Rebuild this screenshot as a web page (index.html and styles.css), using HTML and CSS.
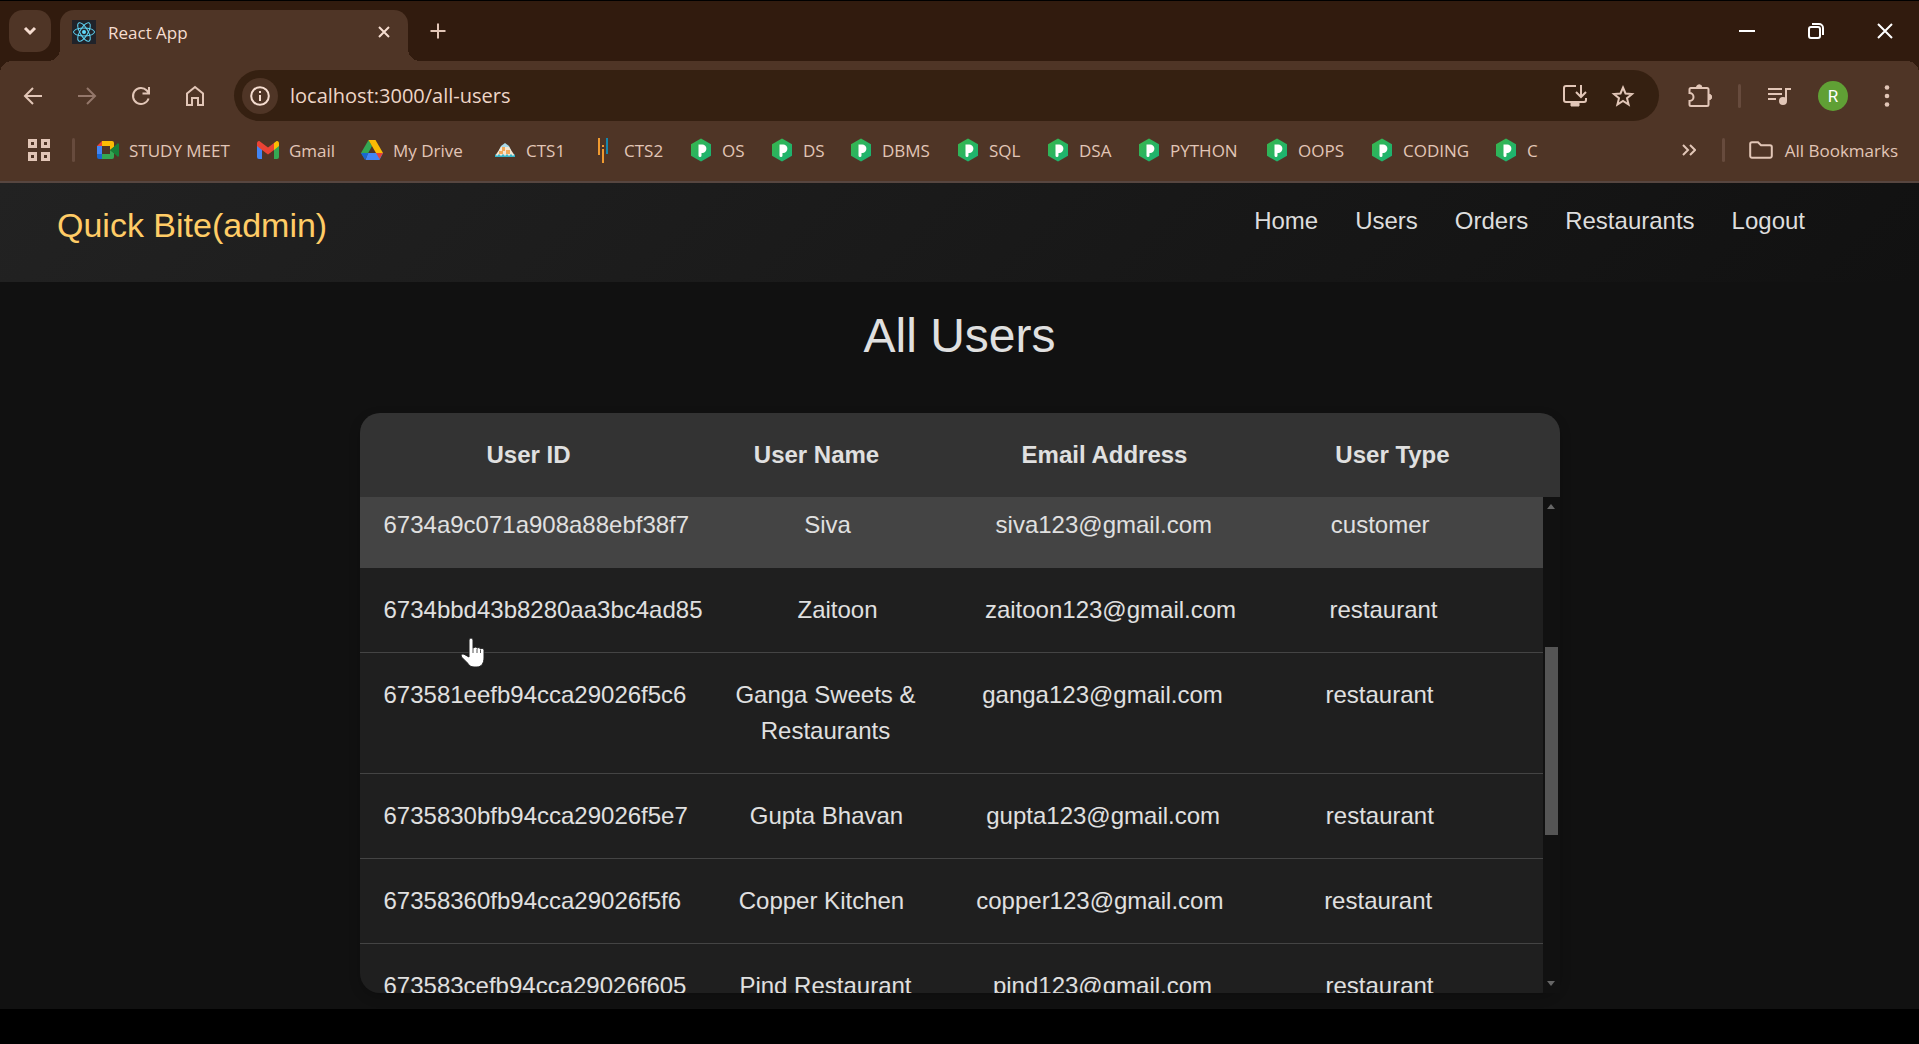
FILE: index.html
```html
<!DOCTYPE html>
<html lang="en">
<head>
<meta charset="utf-8">
<title>React App</title>
<link rel="stylesheet" href="styles.css">
</head>
<body>
<svg class="defs" aria-hidden="true">
  <defs>
    <linearGradient id="hexfill" x1="0" y1="0" x2="1" y2="1"><stop offset="0" stop-color="#3bb54a"/><stop offset="1" stop-color="#16b378"/></linearGradient>
    <symbol id="prep" viewBox="0 0 22 24"><path d="M11 .5 21 6.200v11.600L11 23.500 1 17.800V6.200z" fill="url(#hexfill)"/><path d="M8.500 6.500h3.700a4.200 4.200 0 0 1 0 8.400h-.7v2.600a1.500 1.500 0 0 1-3 0z" fill="#fff"/></symbol>
  </defs>
</svg>
<div class="browser">
  <div class="tabstrip">
    <button class="tab-search" aria-label="Search tabs"><svg width="14" height="10" viewBox="0 0 14 10"><path d="M2 2l5 5 5-5"/></svg></button>
    <div class="tab">
      <svg class="favicon" width="24" height="24" viewBox="0 0 24 24"><rect width="24" height="24" fill="#20232a"/><g fill="none" stroke="#61dafb" stroke-width="1"><ellipse cx="12" cy="12" rx="10.500" ry="4"/><ellipse cx="12" cy="12" rx="10.500" ry="4" transform="rotate(60 12 12)"/><ellipse cx="12" cy="12" rx="10.500" ry="4" transform="rotate(120 12 12)"/></g><circle cx="12" cy="12" r="2" fill="#61dafb"/></svg>
      <span class="tab-title">React App</span>
      <button class="icon-btn small" aria-label="Close tab"><svg width="14" height="14" viewBox="0 0 14 14"><path d="M2 2l10 10M12 2L2 12"/></svg></button>
    </div>
    <button class="icon-btn new-tab" aria-label="New tab"><svg width="18" height="18" viewBox="0 0 18 18"><path d="M9 1.500v15M1.500 9h15"/></svg></button>
    <div class="window-controls">
      <button aria-label="Minimize"><svg width="16" height="16" viewBox="0 0 16 16"><path d="M0 8h16"/></svg></button>
      <button aria-label="Restore"><svg width="16" height="16" viewBox="0 0 16 16"><rect x="1" y="4" width="11" height="11" rx="2"/><path d="M4 1h7a4 4 0 0 1 4 4v7"/></svg></button>
      <button aria-label="Close"><svg width="16" height="16" viewBox="0 0 16 16"><path d="M1 1l14 14M15 1L1 15"/></svg></button>
    </div>
  </div>
  <div class="chrome">
    <div class="toolbar">
      <button class="icon-btn" aria-label="Back"><svg width="20" height="20" viewBox="0 0 20 20"><path d="M19 10H2M10 2l-8 8 8 8"/></svg></button>
      <button class="icon-btn dim" aria-label="Forward"><svg width="20" height="20" viewBox="0 0 20 20"><path d="M1 10h17M10 2l8 8-8 8"/></svg></button>
      <button class="icon-btn" aria-label="Reload"><svg width="20" height="20" viewBox="0 0 20 20"><path d="M17.600 12.500A8 8 0 1 1 15.800 4.500L18 7M18 1v6.500h-6.500"/></svg></button>
      <button class="icon-btn" aria-label="Home"><svg width="20" height="22" viewBox="0 0 20 22"><path d="M2 8.500 10 2l8 6.500V20h-5v-7H7v7H2z"/></svg></button>
      <div class="omnibox">
        <button class="site-info" aria-label="Site information"><svg width="20" height="20" viewBox="0 0 20 20"><circle cx="10" cy="10" r="8.800"/><path d="M10 9v6M10 5v2"/></svg></button>
        <input class="url" type="text" aria-label="Address" value="localhost:3000/all-users">
        <button class="icon-btn inner" aria-label="Install app"><svg width="24" height="24" viewBox="0 0 24 24"><path d="M13 2H3a2 2 0 0 0-2 2v12a2 2 0 0 0 2 2h18a2 2 0 0 0 2-2v-2M18 1v11M13 8l5 5 5-5"/><path d="M8 19h8v3H8z" fill="currentColor" stroke-width="1"/></svg></button>
        <button class="icon-btn inner" aria-label="Bookmark"><svg width="24" height="24" viewBox="0 0 24 24"><path d="M12 3.500l2.500 6 6.500.500-5 4.200 1.600 6.300L12 17l-5.600 3.500L8 14.200 3 10l6.500-.500z"/></svg></button>
      </div>
      <button class="icon-btn" aria-label="Extensions"><svg width="26" height="26" viewBox="0 0 26 26"><path d="M4 5h16a1.500 1.500 0 0 1 1.500 1.500v15A1.500 1.500 0 0 1 20 23H4a1.500 1.500 0 0 1-1.500-1.500V18a4 4 0 0 0 0-8V6.500A1.500 1.500 0 0 1 4 5z"/><path d="M9.500 4.500a2.700 2.700 0 0 1 5.400 0zM22 11.300a2.700 2.700 0 0 1 0 5.400z" fill="currentColor" stroke-width="1"/></svg></button>
      <span class="divider"></span>
      <button class="icon-btn" aria-label="Media controls"><svg width="24" height="20" viewBox="0 0 24 20"><path d="M1 3h14M1 8h14M1 13h8M19 15V3h5"/><circle cx="16" cy="15" r="3" fill="currentColor"/></svg></button>
      <button class="icon-btn" aria-label="Profile"><span class="avatar">R</span></button>
      <button class="icon-btn" aria-label="Menu"><svg width="6" height="22" viewBox="0 0 6 22"><g fill="currentColor" stroke="none"><circle cx="3" cy="2.500" r="2.300"/><circle cx="3" cy="11" r="2.300"/><circle cx="3" cy="19.500" r="2.300"/></g></svg></button>
    </div>
    <div class="bookmarks">
      <button class="icon-btn apps" aria-label="Apps"><svg width="22" height="22" viewBox="0 0 22 22"><path d="M1.500 1.500h6v6h-6zM14.500 1.500h6v6h-6zM1.500 14.500h6v6h-6zM14.500 14.500h6v6h-6z"/></svg></button>
      <span class="divider"></span>
      <nav class="bookmark-list" aria-label="Bookmarks">
        <a href="#"><svg width="22" height="24" viewBox="0 0 22 24"><path d="M5 3v5H0z" fill="#ea4335"/><path d="M5 3h10a2 2 0 0 1 2 2v4l-4 3V8H5z" fill="#fbbc04"/><path d="M0 8h5v8H0z" fill="#4285f4"/><path d="M0 16h5v5H2a2 2 0 0 1-2-2z" fill="#1967d2"/><path d="M5 16h8v-4l4 3v4a2 2 0 0 1-2 2H5z" fill="#34a853"/><path d="M13 12l7-6a1 1 0 0 1 2 1v10a1 1 0 0 1-2 1z" fill="#188038"/></svg>STUDY MEET</a>
        <a href="#"><svg width="22" height="24" viewBox="0 0 22 24"><path d="M0 6l5 4v11H2a2 2 0 0 1-2-2z" fill="#4285f4"/><path d="M22 6l-5 4v11h3a2 2 0 0 0 2-2z" fill="#34a853"/><path d="M17 5l2-1.500c1.500-1 3 0 3 2V8l-5 4z" fill="#fbbc04"/><path d="M0 8V5.500c0-2 1.500-3 3-2L11 9.500 17 5v7l-6 4.500L5 12z" fill="#ea4335"/></svg>Gmail</a>
        <a href="#"><svg width="22" height="24" viewBox="0 0 22 24"><path d="M7.500 2 11 8 4 21 0 15z" fill="#34a853"/><path d="M7.500 2h7l7.500 13h-7z" fill="#fbbc04"/><path d="M7 15h15l-3.500 7h-14z" fill="#4285f4"/><path d="M0 15h7.500L4 22z" fill="#1967d2"/><path d="M15 15h7l-3.500 6z" fill="#ea4335"/></svg>My Drive</a>
        <a href="#"><svg width="22" height="24" viewBox="0 0 22 24"><path d="M11 5l4 3 2 4H5l2-4z" fill="#a9d9ea"/><path d="M7 9h8l6 9H1z" fill="#f4e6d2"/><path d="M8 9h3v4H8zM12 12h4v4h-4zM5 13h4v3H5z" fill="#f0a95a"/><path d="M1 16l2 2 2-2 2 2 2-2 2 2 2-2 2 2 2-2 2 2 2-2v3H1z" fill="#35b4c9"/></svg>CTS1</a>
        <a href="#"><svg width="22" height="26" viewBox="0 0 22 26"><path d="M7 1v17M11 12v14M11 8v2" stroke="#f09a30" stroke-width="2"/><path d="M15 1v16" stroke="#1686ad" stroke-width="2"/></svg>CTS2</a>
        <a href="#"><svg width="22" height="24"><use href="#prep"/></svg>OS</a>
        <a href="#"><svg width="22" height="24"><use href="#prep"/></svg>DS</a>
        <a href="#"><svg width="22" height="24"><use href="#prep"/></svg>DBMS</a>
        <a href="#"><svg width="22" height="24"><use href="#prep"/></svg>SQL</a>
        <a href="#"><svg width="22" height="24"><use href="#prep"/></svg>DSA</a>
        <a href="#"><svg width="22" height="24"><use href="#prep"/></svg>PYTHON</a>
        <a href="#"><svg width="22" height="24"><use href="#prep"/></svg>OOPS</a>
        <a href="#"><svg width="22" height="24"><use href="#prep"/></svg>CODING</a>
        <a href="#"><svg width="22" height="24"><use href="#prep"/></svg>C</a>
      </nav>
      <button class="icon-btn more" aria-label="More bookmarks"><svg width="14" height="12" viewBox="0 0 14 12"><path d="M1 1l5 5-5 5M8 1l5 5-5 5"/></svg></button>
      <span class="divider"></span>
      <button class="all-bookmarks"><svg width="24" height="18" viewBox="0 0 24 18"><path d="M3 1.200h6l3 3h9a1.800 1.800 0 0 1 1.800 1.800v9a1.800 1.800 0 0 1-1.800 1.800H3A1.800 1.800 0 0 1 1.200 15V3A1.800 1.800 0 0 1 3 1.200z"/></svg>All Bookmarks</button>
    </div>
  </div>
</div>
<div class="page">
  <header class="site-header">
    <a class="brand" href="#">Quick Bite(admin)</a>
    <nav class="site-nav" aria-label="Main">
      <a href="#">Home</a><a href="#">Users</a><a href="#">Orders</a><a href="#">Restaurants</a><a href="#">Logout</a>
    </nav>
  </header>
  <main>
    <h1>All Users</h1>
    <div class="table-box">
      <table class="users">
        <thead>
          <tr><th>User ID</th><th>User Name</th><th>Email Address</th><th>User Type</th></tr>
        </thead>
        <tbody>
          <tr class="active"><td>6734a9c071a908a88ebf38f7</td><td>Siva</td><td>siva123@gmail.com</td><td>customer</td></tr>
          <tr><td>6734bbd43b8280aa3bc4ad85</td><td>Zaitoon</td><td>zaitoon123@gmail.com</td><td>restaurant</td></tr>
          <tr><td>673581eefb94cca29026f5c6</td><td>Ganga Sweets &amp; Restaurants</td><td>ganga123@gmail.com</td><td>restaurant</td></tr>
          <tr><td>6735830bfb94cca29026f5e7</td><td>Gupta Bhavan</td><td>gupta123@gmail.com</td><td>restaurant</td></tr>
          <tr><td>67358360fb94cca29026f5f6</td><td>Copper Kitchen</td><td>copper123@gmail.com</td><td>restaurant</td></tr>
          <tr><td>673583cefb94cca29026f605</td><td>Pind Restaurant</td><td>pind123@gmail.com</td><td>restaurant</td></tr>
        </tbody>
      </table>
      <div class="scrollbar" aria-hidden="true">
        <span class="arrow up"></span><span class="thumb"></span><span class="arrow down"></span>
      </div>
      <svg class="pointer" width="26" height="32" viewBox="0 0 26 32" aria-hidden="true"><path d="M9 3a2 2 0 0 1 4 0v8l1-.500a2 2 0 0 1 3 .800 2 2 0 0 1 3.500.800 2 2 0 0 1 3.500 1.500V21c0 5-2.500 9-7 9h-3c-3 0-5-1.500-6.500-4L1.500 20c-1-2 .500-3.500 2.500-2.800L9 20z" fill="#fff" stroke="#222" stroke-width="1"/><path d="M13 11v5M17 12v4M20.500 13v3" stroke="#555" fill="none"/></svg>
    </div>
  </main>
</div>
</body>
</html>
```
FILE: styles.css
```css
* { box-sizing: border-box; }
body {
  margin: 0;
  min-height: 100vh;
  background: #000;
  font-family: "Liberation Sans", Arial, sans-serif;
}
a { color: inherit; text-decoration: none; }
button {
  border: 0;
  padding: 0;
  background: none;
  color: inherit;
  font: inherit;
}
.defs { position: absolute; width: 0; height: 0; }

/* browser window */
.browser {
  --bar: #4f3526;
  --strip: #311b0e;
  --ink: #e2c6b7;
  padding-top: 1px;
  background: #000;
  color: var(--ink);
  font-family: "Open Sans", "Noto Sans", sans-serif;
  font-size: 17px;
}
.browser button svg { display: block; fill: none; stroke: currentColor; stroke-width: 2; }
.tabstrip {
  display: flex;
  align-items: flex-end;
  height: 60px;
  padding-left: 9px;
  background: var(--strip);
}
.tab-search {
  display: grid;
  place-items: center;
  width: 42px;
  height: 42px;
  margin: 0 9px 9px 0;
  border-radius: 14px;
  background: var(--bar);
  color: #f6ddd0;
}
.browser .tab-search svg { stroke-width: 3; }
.tab {
  position: relative;
  display: flex;
  align-items: center;
  width: 348px;
  height: 51px;
  padding: 0 8px 8px 12px;
  border-radius: 14px 14px 0 0;
  background: var(--bar);
  color: #f6ddd0;
}
.tab::before, .tab::after {
  content: "";
  position: absolute;
  bottom: 0;
  width: 12px;
  height: 12px;
}
.tab::before { left: -12px; background: radial-gradient(circle at 0 0, transparent 12px, var(--bar) 12px); }
.tab::after { right: -12px; background: radial-gradient(circle at 100% 0, transparent 12px, var(--bar) 12px); }
.tab-title { flex: 1; margin-left: 12px; padding-top: 2px; }
.icon-btn { display: grid; place-items: center; width: 54px; height: 51px; }
.icon-btn.small { width: 32px; height: 32px; }
.icon-btn.dim { color: #94776a; }
.icon-btn.new-tab { width: 60px; height: 60px; }
.window-controls { display: flex; margin-left: auto; color: #fff; }
.window-controls button { display: grid; place-items: center; width: 69px; height: 60px; }
.chrome {
  border-bottom: 2px solid #574640;
  background-color: var(--strip);
  background-image:
    radial-gradient(circle at 12px 12px, var(--bar) 12px, transparent 12px),
    radial-gradient(circle at calc(100% - 12px) 12px, var(--bar) 12px, transparent 12px),
    linear-gradient(var(--bar), var(--bar)),
    linear-gradient(var(--bar), var(--bar));
  background-size: 100% 12px, 100% 12px, calc(100% - 24px) 12px, 100% 100%;
  background-position: 0 0, 0 0, 12px 0, 0 12px;
  background-repeat: no-repeat;
}
.toolbar { display: flex; align-items: center; padding: 9px 5px 0 6px; }
.omnibox {
  display: flex;
  flex: 1;
  align-items: center;
  height: 51px;
  margin: 0 14px 0 12px;
  padding: 0 12px 0 8px;
  border-radius: 26px;
  background: #352011;
}
.site-info {
  display: grid;
  place-items: center;
  width: 36px;
  height: 36px;
  border-radius: 50%;
  background: var(--bar);
  color: #f6ddd0;
}
.url {
  flex: 1;
  min-width: 0;
  border: 0;
  padding: 0 12px;
  background: none;
  color: #eed6c8;
  font: inherit;
  font-size: 20px;
}
.icon-btn.inner { width: 48px; }
.divider { flex: none; width: 3px; height: 24px; border-radius: 2px; background: #674b3d; }
.toolbar .divider { margin: 0 11px; }
.avatar {
  width: 30px;
  border-radius: 50%;
  background: #60a035;
  color: #fff;
  font-family: Roboto, sans-serif;
  font-size: 17px;
  line-height: 30px;
}
.bookmarks { display: flex; align-items: center; height: 60px; padding: 0 21px 2px 0; }
.icon-btn.apps { width: 22px; margin: 0 22px 0 28px; }
.browser .apps svg { stroke-width: 3; }
.bookmark-list {
  display: grid;
  flex: 1;
  grid-template-columns: 160px 104px 133px 98px 98px 81px 79px 107px 90px 91px 128px 105px 124px auto;
  margin-left: 22px;
}
.bookmark-list a { display: flex; align-items: center; gap: 10px; white-space: nowrap; }
.icon-btn.more { width: 40px; margin-right: 13px; }
.all-bookmarks { display: flex; align-items: center; gap: 12px; margin-left: 24px; white-space: nowrap; }

/* admin page */
.page { padding-bottom: 16px; background: #111; color: #e0e0e0; }
.site-header {
  display: flex;
  justify-content: space-between;
  height: 99px;
  padding: 22px 114px 0 57px;
  background: linear-gradient(135deg, #222, #111);
}
.brand { color: #ffcc66; font-size: 34px; line-height: 40px; }
.site-nav { display: flex; gap: 37px; font-size: 24px; line-height: 32px; color: #ddd; }
h1 {
  margin: 0;
  padding: 26px 0 49px;
  font-size: 48px;
  font-weight: 400;
  line-height: 56px;
  text-align: center;
}
.table-box { position: relative; max-width: 1200px; margin: 0 auto; }
.users {
  display: block;
  overflow: hidden;
  border-radius: 20px;
  box-shadow: 0 4px 12px rgba(0, 0, 0, .2);
  font-size: 24px;
  line-height: 36px;
  text-align: center;
}
.users thead, .users tbody { display: block; }
.users tr { display: flex; padding-right: 48px; }
.users thead { background: #333; }
.users th { padding: 24px; }
.users th:nth-child(odd) { flex: 0 0 338px; }
.users th:nth-child(even) { flex: 1; }
.users tbody { max-height: 496px; margin-right: 17px; overflow: hidden; background: #1f1f1f; }
.users tbody tr { border-bottom: 1px solid #444; }
.users td { padding: 24px; }
.users td:nth-child(even) { flex: 1 1 0; min-width: 0; }
.users td:nth-child(3) { flex: 0 0 324px; }
.users .active { background: #444; }
.users .active td { padding-top: 10px; }

.scrollbar {
  position: absolute;
  top: 84px;
  right: 0;
  bottom: 0;
  display: flex;
  flex-direction: column;
  align-items: center;
  justify-content: space-between;
  width: 17px;
  padding: 7px 0;
  background: #111;
}
.arrow { border: 4px solid transparent; }
.arrow.up { border-top: 0; border-bottom: 5px solid #666; }
.arrow.down { border-bottom: 0; border-top: 5px solid #666; }
.thumb { width: 13px; height: 188px; margin-bottom: 9px; background: #555; }
.pointer { position: absolute; top: 224px; left: 100px; }
```
